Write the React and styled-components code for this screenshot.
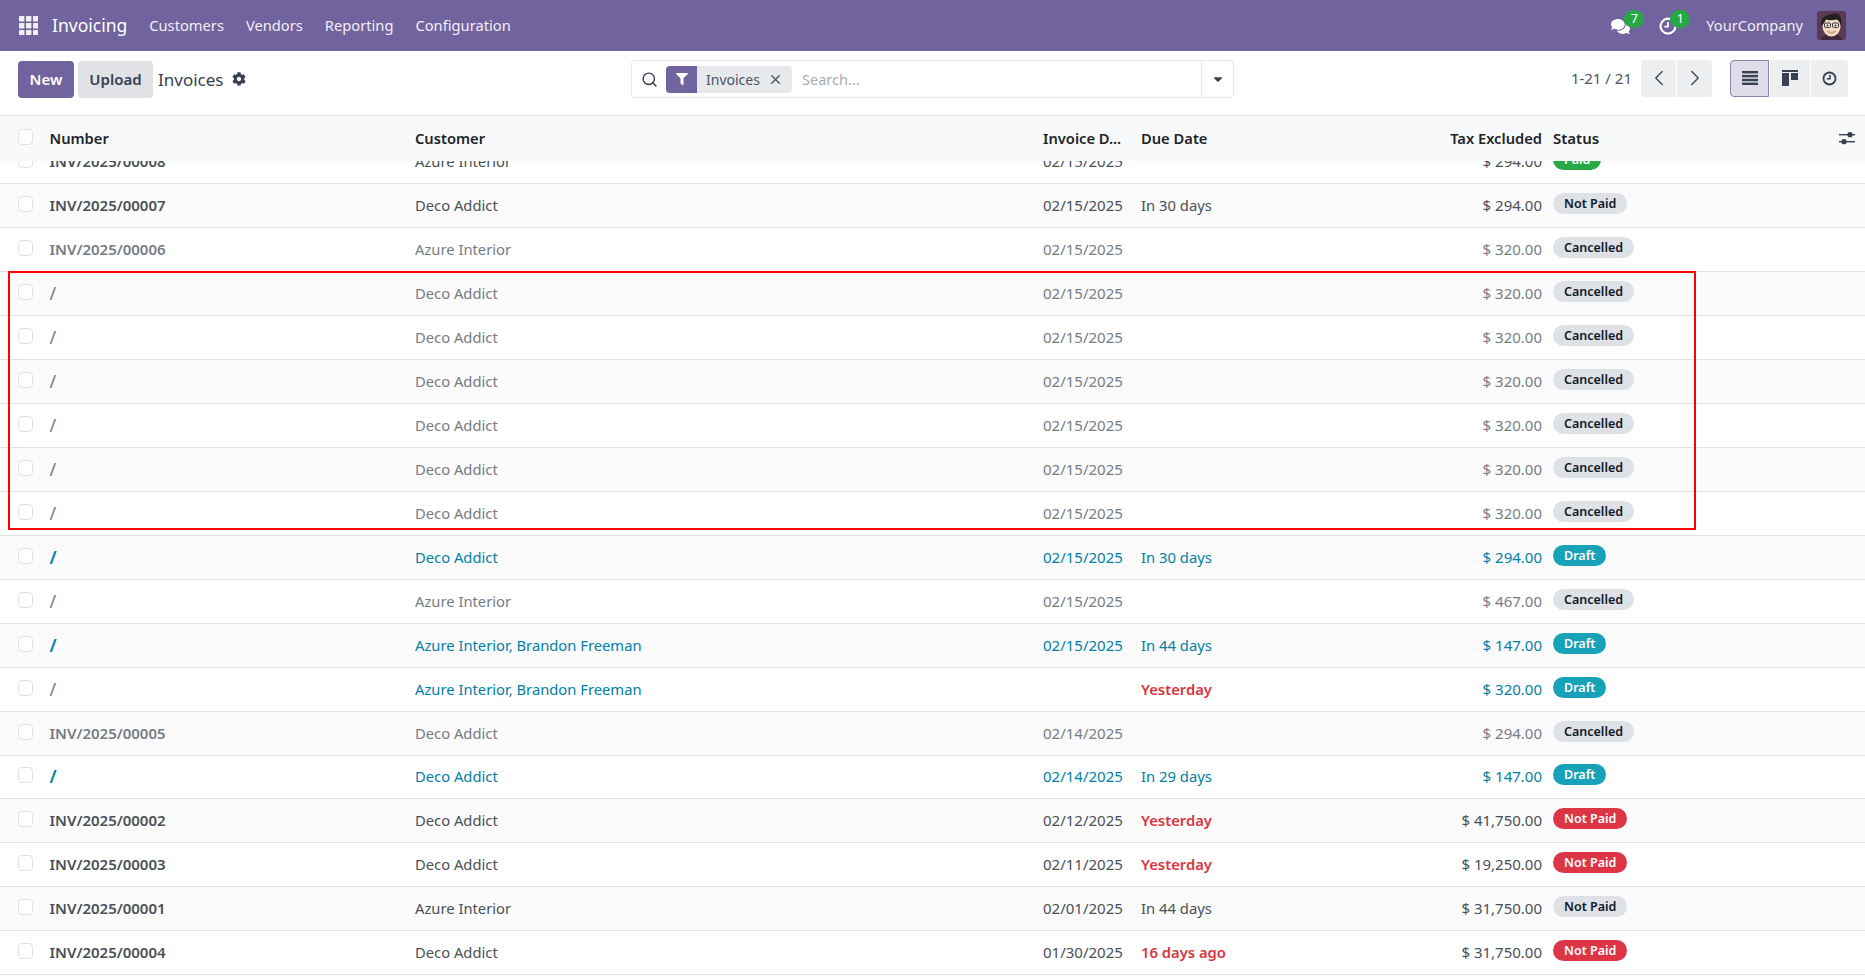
import React from 'react';
import styled, { createGlobalStyle } from 'styled-components';
import { FaCog, FaComments, FaFilter, FaCaretDown } from 'react-icons/fa';
import { ChevronLeft, ChevronRight, Search, X } from 'lucide-react';

const GlobalStyle = createGlobalStyle`
  html, body { margin: 0; padding: 0; height: 100%; background: #fff; }
  body { font-family: "Noto Sans", "Open Sans", sans-serif; font-size: 15px; color: #495057; overflow: hidden; }
  * { box-sizing: border-box; }
`;

const COLS = '41.5px 365.5px 628px 98px 150px 267px 3px 1fr 40px';
const ROW_H = 43.95;

const Page = styled.div`
  display: flex;
  flex-direction: column;
  height: 100vh;
  overflow: hidden;
  position: relative;
`;

const Navbar = styled.header`
  display: flex;
  align-items: center;
  flex: 0 0 50.7px;
  padding: 0 19px;
  background: #71639e;
  color: #fff;
`;

const Brand = styled.span`
  font-size: 17.5px;
  margin: 0 22px 0 14px;
`;

const NavLink = styled.span`
  margin-right: 22px;
  font-size: 14.7px;
  color: #f1eff6;
`;

const NavRight = styled.div`
  margin-left: auto;
  display: flex;
  align-items: center;
`;

const IconBadge = styled.span`
  position: relative;
  display: flex;
  margin-top: 2px;
  margin-right: ${({ $gap }) => $gap}px;
`;

const Count = styled.span`
  position: absolute;
  left: ${({ $left }) => $left}px;
  top: -7px;
  width: 20px;
  height: 18px;
  border-radius: 9px;
  background: #28a745;
  color: #fff;
  font-size: 12.5px;
  line-height: 17px;
  text-align: center;
`;

const Company = styled.span`
  margin-right: 14px;
  font-size: 14.6px;
  color: #f1eff6;
`;

const Controls = styled.div`
  display: grid;
  grid-template-columns: 631px 603px 1fr;
  align-items: center;
  flex: 0 0 65px;
  padding-right: 17px;
  border-bottom: 1.5px solid #dee2e6;
`;

const ControlLeft = styled.div`
  display: flex;
  align-items: center;
  padding: 0 0 7px 18px;
`;

const Button = styled.button`
  width: ${({ $w }) => $w}px;
  height: 37px;
  padding: 0;
  margin-right: 4px;
  border: 0;
  border-radius: 4px;
  font: 600 15px "Noto Sans", sans-serif;
  background: ${({ $primary }) => ($primary ? '#71639e' : '#e0e2e6')};
  color: ${({ $primary }) => ($primary ? '#fff' : '#374151')};
`;

const PageTitle = styled.span`
  margin: 0 9px 0 1px;
  font-size: 17px;
  color: #374151;
`;

const SearchBox = styled.div`
  display: flex;
  align-items: center;
  height: 38px;
  margin-bottom: 7px;
  border: 1px solid #e5e7ea;
  border-radius: 4px;
  color: #374151;
`;

const SearchIcon = styled.span`
  display: flex;
  margin: 0 8px 0 9px;
`;

const Facet = styled.div`
  display: flex;
  align-items: center;
  width: 126px;
  height: 27px;
  border-radius: 4px;
  overflow: hidden;
  background: #e7e9ed;
  color: #4b5563;
`;

const FacetIcon = styled.span`
  display: flex;
  align-items: center;
  justify-content: center;
  flex: 0 0 31px;
  height: 100%;
  background: #71639e;
  color: #fff;
`;

const FacetLabel = styled.span`
  flex: 1;
  padding-left: 9px;
  font-size: 14px;
`;

const FacetClose = styled.span`
  display: flex;
  margin-right: 9px;
`;

const Placeholder = styled.span`
  flex: 1;
  padding-left: 10px;
  font-size: 14.5px;
  color: #a8adb5;
`;

const Caret = styled.span`
  display: flex;
  align-items: center;
  justify-content: center;
  align-self: stretch;
  width: 32px;
  border-left: 1px solid #e5e7ea;
`;

const ControlRight = styled.div`
  display: flex;
  align-items: center;
  justify-content: flex-end;
  padding-bottom: 9px;
`;

const Pager = styled.span`
  margin-right: 9px;
  color: #4b5563;
`;

const BtnGroup = styled.div`
  display: flex;
  gap: 1px;
  margin-right: ${({ $gap }) => $gap || 0}px;
`;

const SquareBtn = styled.span`
  display: flex;
  align-items: center;
  justify-content: center;
  width: ${({ $w }) => $w}px;
  height: 37px;
  background: ${({ $active }) => ($active ? '#e0dcea' : '#eceef0')};
  border: ${({ $active }) => ($active ? '1px solid #8c82b0' : '0')};
  color: #374151;
  &:first-child { border-radius: 4px 0 0 4px; }
  &:last-child { border-radius: 0 4px 4px 0; }
`;

const Row = styled.div`
  display: grid;
  grid-template-columns: ${COLS};
  align-items: center;
  height: ${ROW_H}px;
  padding-bottom: 1px;
  border-bottom: 1.5px solid #dee2e6;
  background: ${({ $alt }) => ($alt ? '#fbfbfc' : '#fff')};
  color: ${({ $tone }) => ({ info: '#0180a5', muted: '#767c85' }[$tone] || '#495057')};
`;

const HeaderRow = styled(Row)`
  flex: 0 0 45px;
  height: 45px;
  padding-bottom: 0;
  border-bottom: 0;
  background: #f8f9fa;
  color: #212529;
  position: relative;
  z-index: 1;
`;

const Body = styled.div`
  flex: 1;
  overflow: hidden;
`;

const List = styled.div`
  margin-top: -20.3px;
`;

const Check = styled.span`
  justify-self: start;
  width: 15px;
  height: 16px;
  margin: -2px 0 0 18px;
  border: 1px solid #dee2e6;
  border-radius: 4px;
  background: #fff;
`;

const Cell = styled.span`
  padding: 0 8px;
  white-space: nowrap;
  font-weight: ${({ $bold }) => ($bold ? 600 : 400)};
  text-align: ${({ $right }) => ($right ? 'right' : 'left')};
  color: ${({ $red, $muted }) => ($red ? '#d9363e' : $muted ? '#767c85' : 'inherit')};
`;

const HeadCell = styled(Cell)`
  font-size: 14.7px;
  font-weight: 600;
`;

const SlashCell = styled(Cell)`
  font-size: 18px;
  line-height: 20px;
`;

const NameCell = styled(Cell)`
  font-size: 14.75px;
`;

const Due = styled(Cell)`
  font-size: 14.8px;
  font-weight: ${({ $red }) => ($red ? 600 : 400)};
`;

const StatusHead = styled(Cell)`
  grid-column: 8;
  padding: 0;
  font-weight: 600;
`;

const StatusCell = styled.span`
  grid-column: 8;
  display: flex;
  margin-top: -3px;
`;

const Badge = styled.span`
  height: 21px;
  padding: 0 11px;
  border-radius: 10.5px;
  font-size: 12.5px;
  font-weight: 600;
  line-height: 21px;
  background: ${({ $kind }) => ({ info: '#17a2b8', danger: '#dc3545', success: '#28a745' }[$kind] || '#dee2e6')};
  color: ${({ $kind }) => ($kind ? '#fff' : '#111827')};
`;

const Tune = styled.span`
  display: flex;
  justify-content: flex-end;
  padding-right: 10px;
`;

const RedFrame = styled.div`
  position: absolute;
  left: 8px;
  top: 271px;
  width: 1688px;
  height: 259px;
  border: 2px solid #f00;
  pointer-events: none;
  z-index: 2;
`;

const AppsIcon = () => (
  <svg width="19" height="19" viewBox="0 0 19 19" fill="#f1eff6">
    {[0, 7, 14].map((y) =>
      [0, 7, 14].map((x) => <rect key={`${x}-${y}`} x={x} y={y} width="5.4" height="5.4" rx="0.6" />)
    )}
  </svg>
);

const ActivityIcon = () => (
  <svg width="18" height="18" viewBox="0 0 18 18" fill="none" stroke="#fff" strokeWidth="2.2">
    <path d="M11 2a7.4 7.4 0 1 0 5.4 7" />
    <path d="M9 5v4.6H5.4" strokeWidth="1.8" />
  </svg>
);

const ListIcon = () => (
  <svg width="16" height="14" viewBox="0 0 16 14" fill="currentColor">
    <rect y="0" width="16" height="2.4" />
    <rect y="3.9" width="16" height="2.4" />
    <rect y="7.8" width="16" height="2.4" />
    <rect y="11.6" width="16" height="2.4" />
  </svg>
);

const KanbanIcon = () => (
  <svg width="16" height="16" viewBox="0 0 16 16" fill="currentColor">
    <rect width="16" height="2" />
    <rect y="3" width="7" height="13" />
    <rect x="9" y="3" width="7" height="7" />
  </svg>
);

const ClockIcon = () => (
  <svg width="15" height="15" viewBox="0 0 15 15" fill="none" stroke="currentColor" strokeWidth="1.8">
    <circle cx="7.5" cy="7.5" r="6" />
    <path d="M8 3.8v4H4.8" strokeWidth="1.5" />
  </svg>
);

const SlidersIcon = () => (
  <svg width="16" height="16" viewBox="0 0 16 16" fill="#374151">
    <rect y="4" width="16" height="1.4" />
    <rect y="11" width="16" height="1.4" />
    <circle cx="11" cy="4.7" r="2.6" />
    <circle cx="5" cy="11.7" r="2.6" />
  </svg>
);

const Avatar = () => (
  <svg width="29" height="29" viewBox="0 0 29 29">
    <rect width="29" height="29" rx="3" fill="#5b3a55" />
    <path d="M4 29c1-5 5-6 10-6s10 1 11 6z" fill="#3f2a3f" />
    <ellipse cx="14.5" cy="15.5" rx="9" ry="10" fill="#f6dcc0" />
    <path d="M4.5 15C3 7 9 3.5 14 3.5c3-2 9-.5 9.500 3 1.500 3 1 6 .5 8-1-3-2-5-4-6-4 1-9 1-11 0-1 2-2 4-4.500 6.500z" fill="#23201f" />
    <rect x="7.500" y="12" width="6" height="4.400" rx="1" fill="#efe6da" stroke="#333" strokeWidth="1" />
    <rect x="15.500" y="12" width="6" height="4.400" rx="1" fill="#efe6da" stroke="#333" strokeWidth="1" />
    <circle cx="10.500" cy="14.300" r="0.900" fill="#222" />
    <circle cx="18.500" cy="14.300" r="0.900" fill="#222" />
    <path d="M10.500 20c2 1.800 6 1.800 8 0-1 3-7 3-8 0z" fill="#fff" stroke="#8c4a3a" strokeWidth="0.500" />
  </svg>
);

const rows = [
  { number: 'INV/2025/00008', bold: true, customer: 'Azure Interior', date: '02/15/2025', amount: '$ 294.00', status: 'Paid', kind: 'success' },
  { number: 'INV/2025/00007', bold: true, customer: 'Deco Addict', date: '02/15/2025', due: 'In 30 days', amount: '$ 294.00', status: 'Not Paid' },
  { number: 'INV/2025/00006', bold: true, tone: 'muted', customer: 'Azure Interior', date: '02/15/2025', amount: '$ 320.00', status: 'Cancelled' },
  ...Array.from({ length: 6 }, () => ({ number: '/', tone: 'muted', customer: 'Deco Addict', date: '02/15/2025', amount: '$ 320.00', status: 'Cancelled' })),
  { number: '/', bold: true, tone: 'info', customer: 'Deco Addict', date: '02/15/2025', due: 'In 30 days', amount: '$ 294.00', status: 'Draft', kind: 'info' },
  { number: '/', tone: 'muted', customer: 'Azure Interior', date: '02/15/2025', amount: '$ 467.00', status: 'Cancelled' },
  { number: '/', bold: true, tone: 'info', customer: 'Azure Interior, Brandon Freeman', date: '02/15/2025', due: 'In 44 days', amount: '$ 147.00', status: 'Draft', kind: 'info' },
  { number: '/', plainNumber: true, tone: 'info', customer: 'Azure Interior, Brandon Freeman', due: 'Yesterday', red: true, amount: '$ 320.00', status: 'Draft', kind: 'info' },
  { number: 'INV/2025/00005', bold: true, tone: 'muted', customer: 'Deco Addict', date: '02/14/2025', amount: '$ 294.00', status: 'Cancelled' },
  { number: '/', bold: true, tone: 'info', customer: 'Deco Addict', date: '02/14/2025', due: 'In 29 days', amount: '$ 147.00', status: 'Draft', kind: 'info' },
  { number: 'INV/2025/00002', bold: true, customer: 'Deco Addict', date: '02/12/2025', due: 'Yesterday', red: true, amount: '$ 41,750.00', status: 'Not Paid', kind: 'danger' },
  { number: 'INV/2025/00003', bold: true, customer: 'Deco Addict', date: '02/11/2025', due: 'Yesterday', red: true, amount: '$ 19,250.00', status: 'Not Paid', kind: 'danger' },
  { number: 'INV/2025/00001', bold: true, customer: 'Azure Interior', date: '02/01/2025', due: 'In 44 days', amount: '$ 31,750.00', status: 'Not Paid' },
  { number: 'INV/2025/00004', bold: true, customer: 'Deco Addict', date: '01/30/2025', due: '16 days ago', red: true, amount: '$ 31,750.00', status: 'Not Paid', kind: 'danger' },
];

const App = () => (
  <Page>
    <GlobalStyle />
    <Navbar>
      <AppsIcon />
      <Brand>Invoicing</Brand>
      <NavLink>Customers</NavLink>
      <NavLink>Vendors</NavLink>
      <NavLink>Reporting</NavLink>
      <NavLink>Configuration</NavLink>
      <NavRight>
        <IconBadge $gap={29}>
          <FaComments size={19} color="#fff" />
          <Count $left={13}>7</Count>
        </IconBadge>
        <IconBadge $gap={29}>
          <ActivityIcon />
          <Count $left={11}>1</Count>
        </IconBadge>
        <Company>YourCompany</Company>
        <Avatar />
      </NavRight>
    </Navbar>
    <Controls>
      <ControlLeft>
        <Button $primary $w={56}>New</Button>
        <Button $w={75}>Upload</Button>
        <PageTitle>Invoices</PageTitle>
        <FaCog size={14} color="#374151" />
      </ControlLeft>
      <SearchBox>
        <SearchIcon><Search size={17} strokeWidth={2} /></SearchIcon>
        <Facet>
          <FacetIcon><FaFilter size={12} /></FacetIcon>
          <FacetLabel>Invoices</FacetLabel>
          <FacetClose><X size={15} strokeWidth={2.2} /></FacetClose>
        </Facet>
        <Placeholder>Search...</Placeholder>
        <Caret><FaCaretDown size={14} /></Caret>
      </SearchBox>
      <ControlRight>
        <Pager>1-21 / 21</Pager>
        <BtnGroup $gap={18}>
          <SquareBtn $w={35}><ChevronLeft size={26} strokeWidth={1.2} /></SquareBtn>
          <SquareBtn $w={35}><ChevronRight size={26} strokeWidth={1.2} /></SquareBtn>
        </BtnGroup>
        <BtnGroup>
          <SquareBtn $w={39} $active><ListIcon /></SquareBtn>
          <SquareBtn $w={40}><KanbanIcon /></SquareBtn>
          <SquareBtn $w={37}><ClockIcon /></SquareBtn>
        </BtnGroup>
      </ControlRight>
    </Controls>
    <HeaderRow>
      <Check />
      <HeadCell>Number</HeadCell>
      <HeadCell>Customer</HeadCell>
      <HeadCell>Invoice D...</HeadCell>
      <HeadCell>Due Date</HeadCell>
      <HeadCell $right>Tax Excluded</HeadCell>
      <StatusHead>Status</StatusHead>
      <Tune><SlidersIcon /></Tune>
    </HeaderRow>
    <Body>
      <List>
        {rows.map((row, i) => (
          <Row key={i} $alt={i % 2 === 1} $tone={row.tone}>
            <Check />
            {row.number === '/' ? (
              <SlashCell $bold={row.bold} $muted={row.plainNumber}>/</SlashCell>
            ) : (
              <Cell $bold={row.bold}>{row.number}</Cell>
            )}
            <NameCell>{row.customer}</NameCell>
            <Cell>{row.date}</Cell>
            <Due $red={row.red}>{row.due}</Due>
            <Cell $right>{row.amount}</Cell>
            <StatusCell>
              <Badge $kind={row.kind}>{row.status}</Badge>
            </StatusCell>
          </Row>
        ))}
      </List>
    </Body>
    <RedFrame />
  </Page>
);

export default App;
